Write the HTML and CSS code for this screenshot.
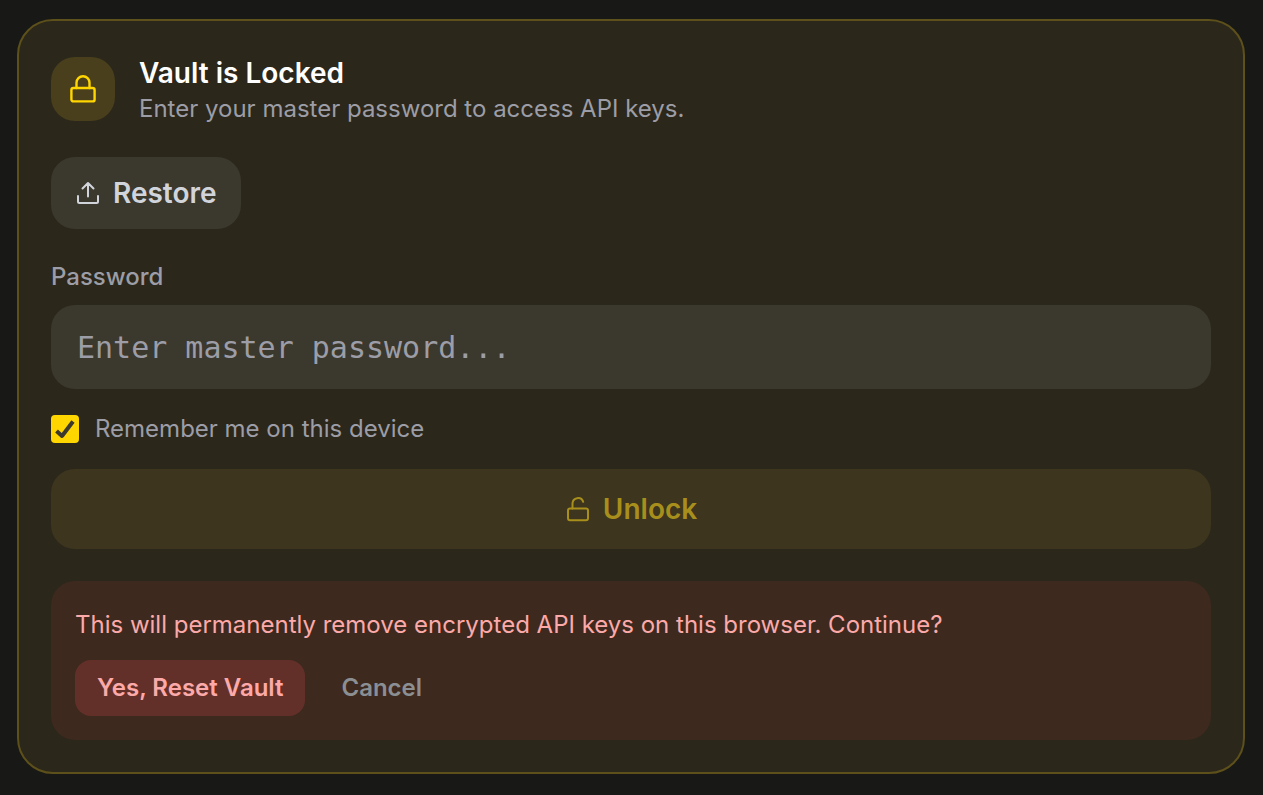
FILE: index.html
```html
<!DOCTYPE html>
<html lang="en">
<head>
<meta charset="utf-8">
<meta name="viewport" content="width=device-width, initial-scale=1">
<title>Vault</title>
<link rel="stylesheet" href="styles.css">
</head>
<body class="page">
<main class="vault">
  <header class="vault-header">
    <span class="vault-badge">
      <svg class="icon-lock" viewBox="0 0 32 32" aria-hidden="true"><rect x="4.400" y="15" width="23.200" height="13.400" rx="2"/><path d="M9.500 15V9.700a6.500 6.500 0 0 1 13 0V15"/></svg>
    </span>
    <div>
      <h1 class="vault-title">Vault is Locked</h1>
      <p class="vault-subtitle">Enter your master password to access API keys.</p>
    </div>
  </header>

  <button class="restore" type="button">
    <svg class="icon-small" viewBox="0 0 24 24" aria-hidden="true"><path d="M13 15.500V2M7.500 7.500 13 2l5.500 5.500M3 15v5.500a1.500 1.500 0 0 0 1.500 1.500h17a1.500 1.500 0 0 0 1.500-1.500V15"/></svg>
    Restore
  </button>

  <form class="unlock-form">
    <label class="field-label" for="password">Password</label>
    <input class="field" id="password" type="password" placeholder="Enter master password...">
    <div class="remember">
      <input class="remember-box" id="remember" type="checkbox" checked>
      <svg class="remember-tick" viewBox="0 0 28 28" aria-hidden="true"><path d="M5.500 16l5.500 5L22 6.500"/></svg>
      <label for="remember">Remember me on this device</label>
    </div>
    <button class="unlock" type="button">
      <svg class="icon-small" viewBox="0 0 24 24" aria-hidden="true"><rect x="3" y="11.400" width="20" height="11.800" rx="2"/><path d="M7.500 11.400V6.500a5.500 5.500 0 0 1 10.700-1.700"/></svg>
      Unlock
    </button>
  </form>

  <section class="warning">
    <p class="warning-text">This will permanently remove encrypted API keys on this browser. Continue?</p>
    <div class="warning-actions">
      <button class="reset" type="button">Yes, Reset Vault</button>
      <button class="cancel" type="button">Cancel</button>
    </div>
  </section>
</main>
</body>
</html>
```
FILE: styles.css
```css
* {
  box-sizing: border-box;
}

.page {
  margin: 0;
  padding: 19px 18px 20px 17px;
  background: #181816;
  color: #9c9da6;
  font: 24px/32px Inter, "Liberation Sans", sans-serif;
}

.vault {
  display: flex;
  flex-direction: column;
  align-items: stretch;
  gap: 32px;
  padding: 32px;
  border: 2px solid #5d501b;
  border-radius: 36px;
  background: #2b271b;
}

.vault-header {
  display: flex;
  align-items: center;
  gap: 24px;
}

.vault-badge {
  display: flex;
  align-items: center;
  justify-content: center;
  flex: none;
  width: 64px;
  height: 64px;
  border-radius: 24px;
  background: #493f1c;
  color: #ffd600;
}

.icon-lock,
.icon-small {
  flex: none;
  fill: none;
  stroke: currentColor;
  stroke-width: 2;
  stroke-linecap: round;
  stroke-linejoin: round;
  overflow: visible;
}

.icon-lock {
  width: 32px;
  height: 32px;
  stroke-width: 2.4;
}

.icon-small {
  width: 24px;
  height: 24px;
}

.vault-title {
  margin: 0;
  color: #fff;
  font-size: 28px;
  line-height: 40px;
  font-weight: 600;
}

.vault-subtitle,
.warning-text {
  margin: 0;
}

button {
  border: 0;
  cursor: pointer;
  font: inherit;
}

.restore,
.unlock {
  display: flex;
  align-items: center;
  justify-content: center;
  gap: 14px;
  border-radius: 24px;
  font-size: 28px;
  line-height: 40px;
  font-weight: 600;
}

.restore {
  align-self: flex-start;
  padding: 16px 24px;
  background: #3b382d;
  color: #d1d5db;
}

.unlock-form {
  display: flex;
  flex-direction: column;
  gap: 24px;
}

.field-label {
  margin-bottom: -12px;
  font-weight: 500;
}

.field {
  width: 100%;
  height: 84px;
  padding: 0 26px;
  border: 0;
  border-radius: 24px;
  outline: 0;
  background: #3b382d;
  color: #fff;
  font: 30px/40px "DejaVu Sans Mono", monospace;
}

.field::placeholder {
  color: #9c9da6;
  opacity: 1;
}

.remember {
  display: grid;
  grid-template-columns: 28px 1fr;
  align-items: center;
  column-gap: 16px;
}

.remember-box,
.remember-tick {
  grid-area: 1 / 1;
  width: 28px;
  height: 28px;
  margin: 0;
}

.remember-box {
  appearance: none;
  border-radius: 4px;
  background: #3b382d;
  cursor: pointer;
}

.remember-box:checked {
  background: #ffd600;
}

.remember-tick {
  visibility: hidden;
  fill: none;
  stroke: #3b382d;
  stroke-width: 4;
  stroke-linejoin: round;
  pointer-events: none;
}

.remember-box:checked + .remember-tick {
  visibility: visible;
}

.unlock {
  padding: 20px;
  background: #3d351e;
  color: #a88f1c;
}

.warning {
  padding: 24px;
  border-radius: 24px;
  background: #3d291e;
  color: #fcaaa9;
}

.warning-text {
  line-height: 39px;
}

.warning-actions {
  display: flex;
  gap: 16px;
  margin-top: 16px;
}

.reset,
.cancel {
  padding: 12px 22px;
  border-radius: 16px;
  font-weight: 600;
}

.reset {
  background: #633029;
  color: #fcaaa9;
}

.cancel {
  padding: 12px 20px;
  background: transparent;
  color: #8b8f93;
}
```
